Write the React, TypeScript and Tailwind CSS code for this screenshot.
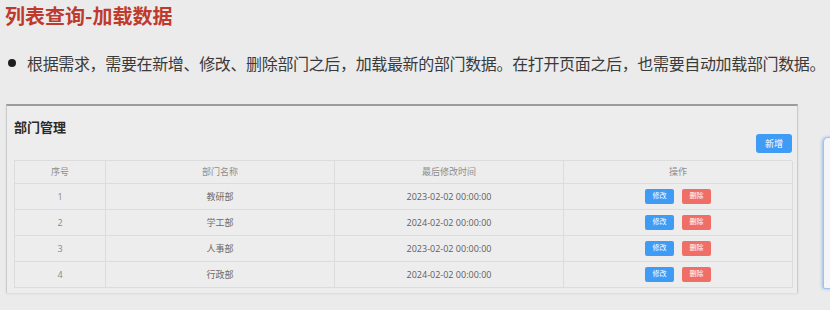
import React from "react";

const rows = [
  { id: 1, name: "教研部", time: "2023-02-02 00:00:00" },
  { id: 2, name: "学工部", time: "2024-02-02 00:00:00" },
  { id: 3, name: "人事部", time: "2023-02-02 00:00:00" },
  { id: 4, name: "行政部", time: "2024-02-02 00:00:00" },
];

const cell =
  "flex items-center justify-center border-r border-b border-[#dcdcdc]";

export default function App() {
  return (
    <div className="w-[830px] h-[310px] bg-[#ebebeb] overflow-hidden font-['Noto_Sans_CJK_SC','Noto_Sans',sans-serif]">
      <div className="pl-[5px] pt-[4px] h-[28px] text-[20px] leading-[24px] font-bold text-[#bf3a2c]">
        列表查询-加载数据
      </div>
      <div className="mt-[23px] flex items-center h-[24px] pl-[8px]">
        <div className="w-[8px] h-[8px] rounded-full bg-[#1e1e1e] mr-[11px] shrink-0" />
        <div className="text-[16px] leading-[24px] tracking-[-0.35px] text-[#3a3a3a] whitespace-nowrap">
          根据需求，需要在新增、修改、删除部门之后，加载最新的部门数据。在打开页面之后，也需要自动加载部门数据。
        </div>
      </div>
      <div className="mt-[29px] flex items-start">
        <div className="ml-[6px] w-[792px] h-[189px] shrink-0 border-t-2 border-t-[#9c9c9c] border-x border-x-[#cbcbcb] bg-[#ededed] pl-[7px] pr-[5px] shadow-[0_1px_2px_rgba(0,0,0,0.08)]">
          <div className="mt-[14px] h-[14px] leading-[14px] text-[13px] font-bold text-[#2a2a2a]">
            部门管理
          </div>
          <div className="flex justify-end">
            <div className="w-[36px] h-[19px] rounded-[3px] bg-[#3f9cf5] text-white text-[9px] flex items-center justify-center">
              新增
            </div>
          </div>
          <div className="mt-[7px] w-[778px] grid grid-cols-[91px_229px_229px_229px] border-l border-t border-[#dcdcdc] text-[9px] text-[#6a6a6a] font-['Open_Sans','Noto_Sans_CJK_SC',sans-serif]">
            <div className={`${cell} h-[23px] text-[#8d8d8d]`}>序号</div>
            <div className={`${cell} h-[23px] text-[#8d8d8d]`}>部门名称</div>
            <div className={`${cell} h-[23px] text-[#8d8d8d]`}>最后修改时间</div>
            <div className={`${cell} h-[23px] text-[#8d8d8d]`}>操作</div>
            {rows.map((r) => (
              <React.Fragment key={r.id}>
                <div className={`${cell} h-[26px] text-[#8a8a8a]`}>{r.id}</div>
                <div className={`${cell} h-[26px]`}>{r.name}</div>
                <div className={`${cell} h-[26px] text-[#5e5e5e]`}>{r.time}</div>
                <div className={`${cell} h-[26px] gap-[8px]`}>
                  <div className="w-[29px] h-[15px] rounded-[2px] bg-[#3f9cf5] text-white text-[7px] flex items-center justify-center">
                    修改
                  </div>
                  <div className="w-[29px] h-[15px] rounded-[2px] bg-[#ef6f66] text-white text-[7px] flex items-center justify-center">
                    删除
                  </div>
                </div>
              </React.Fragment>
            ))}
          </div>
        </div>
        <div className="ml-[25px] mt-[33px] w-[20px] h-[152px] shrink-0 rounded-tl-[5px] rounded-bl-[2px] border border-[#9cc3f2] bg-[#f4f5f7] shadow-[-1px_0_3px_rgba(80,150,240,0.5)]" />
      </div>
    </div>
  );
}
